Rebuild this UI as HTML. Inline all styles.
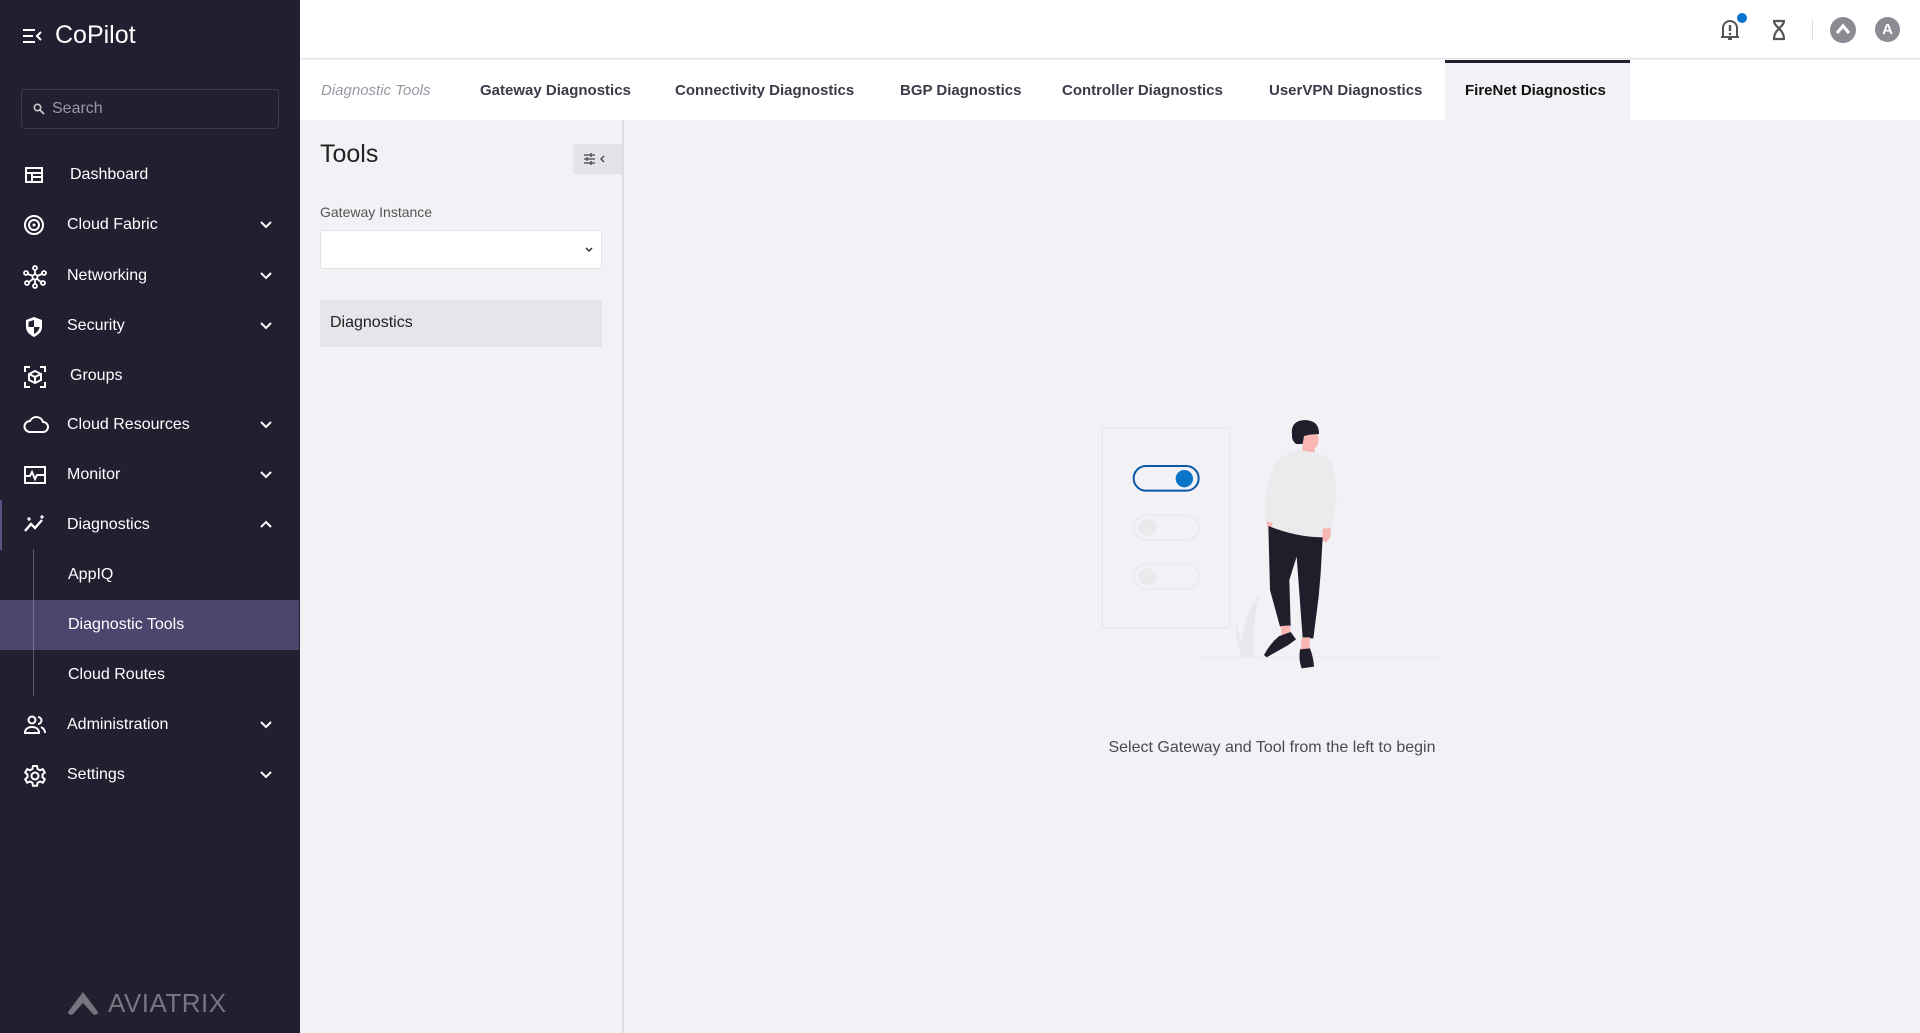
<!DOCTYPE html>
<html><head><meta charset="utf-8"><style>
*{box-sizing:border-box;margin:0;padding:0}
body{width:1920px;height:1033px;overflow:hidden;font-family:"Liberation Sans",sans-serif;background:#f2f2f6;position:relative}
.sb{position:absolute;left:0;top:0;width:300px;height:1033px;background:#211f30;color:#fff}
.logo{position:absolute;left:55px;top:21px;font-size:25px}
.ham{position:absolute;left:22px;top:28px}
.search{position:absolute;left:21px;top:89px;width:258px;height:40px;border:1px solid #3a3750;border-radius:4px;color:#9a98a8;font-size:16px;padding:10px 0 0 30px}
.search svg{position:absolute;left:11px;top:13px}
.it{position:absolute;left:0;width:300px;height:50px;font-size:16px;line-height:50px}
.it .t{position:absolute;left:67px}
.it .ic{position:absolute;left:23px;top:14px}
.it .ch{position:absolute;left:259px;top:19px}
.sub .t{left:68px}
.act{background:#4e456e}
.hdr{position:absolute;left:300px;top:0;width:1620px;height:59px;background:#fff;border-bottom:1px solid #e3e3e8}
.tabs{position:absolute;left:300px;top:60px;width:1620px;height:60px;background:#fff;font-size:15px;font-weight:bold;color:#3b3a48}
.tabs span{position:absolute;top:22px}
.panel{position:absolute;left:300px;top:120px;width:324px;height:913px;border-right:2px solid #dcdce2;background:#f2f2f6}
</style></head><body>
<div class="sb">
 <svg class="ham" width="20" height="16" viewBox="0 0 20 16"><path d="M1 2h12M1 8h10M1 14h12M19 4l-4 4 4 4" stroke="#fff" stroke-width="2" fill="none"/></svg>
 <div class="logo">CoPilot</div>
 <div class="search"><svg width="12" height="12" viewBox="0 0 12 12"><circle cx="4.5" cy="4.5" r="3.2" stroke="#ccc" stroke-width="1.6" fill="none"/><path d="M7 7l4 4" stroke="#ccc" stroke-width="1.8"/></svg>Search</div>

 <div class="it" style="top:150px"><svg class="ic" width="22" height="22" viewBox="0 0 22 22"><rect x="3" y="4" width="16" height="14" stroke="#fff" stroke-width="2" fill="none"/><path d="M3 9h16M9 9v9M9 13h10" stroke="#fff" stroke-width="2"/></svg><span class="t" style="left:70px">Dashboard</span></div>
 <div class="it" style="top:200px"><svg class="ic" width="22" height="22" viewBox="0 0 22 22"><circle cx="11" cy="11" r="9" stroke="#fff" stroke-width="2" fill="none"/><circle cx="11" cy="11" r="5" stroke="#fff" stroke-width="2" fill="none"/><circle cx="11" cy="11" r="1.5" fill="#fff"/></svg><span class="t">Cloud Fabric</span><svg class="ch" width="14" height="12" viewBox="0 0 14 12"><path d="M2 3l5 5 5-5" stroke="#fff" stroke-width="2" fill="none"/></svg></div>
 <div class="it" style="top:251px"><svg class="ic" width="24" height="24" viewBox="0 0 24 24"><g stroke="#fff" stroke-width="1.8" fill="none"><circle cx="12" cy="12" r="2.5"/><circle cx="12" cy="3" r="2"/><circle cx="12" cy="21" r="2"/><circle cx="3" cy="8" r="2"/><circle cx="21" cy="8" r="2"/><circle cx="4" cy="18" r="2"/><circle cx="20" cy="18" r="2"/><path d="M12 5v5M12 14v5M5 9l5 2M19 9l-5 2M6 17l4-3M18 17l-4-3"/></g></svg><span class="t">Networking</span><svg class="ch" width="14" height="12" viewBox="0 0 14 12"><path d="M2 3l5 5 5-5" stroke="#fff" stroke-width="2" fill="none"/></svg></div>
 <div class="it" style="top:301px"><svg class="ic" width="22" height="24" viewBox="0 0 22 24"><path d="M11 2l8 3v7c0 5-4 8-8 10-4-2-8-5-8-10V5z" fill="#fff"/><path d="M11 5v7H5.5V6.8z M11 12h5.6c-.6 3.5-3 5.6-5.6 7z" fill="#211f30"/></svg><span class="t">Security</span><svg class="ch" width="14" height="12" viewBox="0 0 14 12"><path d="M2 3l5 5 5-5" stroke="#fff" stroke-width="2" fill="none"/></svg></div>
 <div class="it" style="top:351px"><svg class="ic" width="24" height="24" viewBox="0 0 24 24"><g stroke="#fff" stroke-width="2" fill="none"><path d="M2 7V2h5M17 2h5v5M22 17v5h-5M7 22H2v-5"/><path d="M12 6l6 3v6l-6 3-6-3V9z"/><path d="M6 9l6 3 6-3M12 12v6"/></g></svg><span class="t" style="left:70px">Groups</span></div>
 <div class="it" style="top:400px"><svg class="ic" width="26" height="22" viewBox="0 0 26 22"><path d="M7 18h13a5 5 0 0 0 0-10 7 7 0 0 0-13-1 5.5 5.5 0 0 0 0 11z" stroke="#fff" stroke-width="2" fill="none"/></svg><span class="t">Cloud Resources</span><svg class="ch" width="14" height="12" viewBox="0 0 14 12"><path d="M2 3l5 5 5-5" stroke="#fff" stroke-width="2" fill="none"/></svg></div>
 <div class="it" style="top:450px"><svg class="ic" width="24" height="22" viewBox="0 0 24 22"><g stroke="#fff" stroke-width="2" fill="none"><rect x="2" y="3" width="20" height="16"/><path d="M2 12h5l2-4 3 7 2-4h8"/></g></svg><span class="t">Monitor</span><svg class="ch" width="14" height="12" viewBox="0 0 14 12"><path d="M2 3l5 5 5-5" stroke="#fff" stroke-width="2" fill="none"/></svg></div>
 <div style="position:absolute;left:0;top:500px;width:2px;height:50px;background:#5a5280"></div>
 <div class="it" style="top:500px"><svg class="ic" width="24" height="22" viewBox="0 0 24 22"><path d="M2 17l6-7 4 4 7-8" stroke="#fff" stroke-width="2.4" fill="none"/><path d="M4 5h4M6 3v4M19 1v4M17 3h4" stroke="#fff" stroke-width="1.3"/></svg><span class="t">Diagnostics</span><svg class="ch" width="14" height="12" viewBox="0 0 14 12"><path d="M2 8l5-5 5 5" stroke="#fff" stroke-width="2" fill="none"/></svg></div>
 <div style="position:absolute;left:33px;top:549px;width:1px;height:147px;background:#5a5870"></div>
 <div class="it sub" style="top:550px"><span class="t">AppIQ</span></div>
 <div class="it sub act" style="top:600px;width:299px"><span class="t">Diagnostic Tools</span></div>
 <div style="position:absolute;left:33px;top:600px;width:1px;height:50px;background:#7a7294"></div>
 <div class="it sub" style="top:650px"><span class="t">Cloud Routes</span></div>
 <div class="it" style="top:700px"><svg class="ic" width="24" height="22" viewBox="0 0 24 22"><g stroke="#fff" stroke-width="2" fill="none"><circle cx="9" cy="6" r="3.5"/><path d="M2 19c0-4 3-6 7-6s7 2 7 6z"/><path d="M15 3a3.5 3.5 0 0 1 0 7M18 13c2 1 4 3 4 6"/></g></svg><span class="t">Administration</span><svg class="ch" width="14" height="12" viewBox="0 0 14 12"><path d="M2 3l5 5 5-5" stroke="#fff" stroke-width="2" fill="none"/></svg></div>
 <div class="it" style="top:750px"><svg class="ic" width="24" height="24" viewBox="0 0 24 24"><g stroke="#fff" stroke-width="2" fill="none"><circle cx="12" cy="12" r="3.5"/><path d="M10 2h4l.6 3 2.4 1.3 2.8-1.2 2 3.4-2.3 2v2.8l2.3 2-2 3.4-2.8-1.2-2.4 1.3-.6 3h-4l-.6-3-2.4-1.3-2.8 1.2-2-3.4 2.3-2v-2.8l-2.3-2 2-3.4 2.8 1.2L9.4 5z"/></g></svg><span class="t">Settings</span><svg class="ch" width="14" height="12" viewBox="0 0 14 12"><path d="M2 3l5 5 5-5" stroke="#fff" stroke-width="2" fill="none"/></svg></div>
 <svg style="position:absolute;left:65px;top:990px" width="36" height="26" viewBox="0 0 36 26"><path d="M18 2L3 22a3 3 0 0 0 5 2l10-11 10 11a3 3 0 0 0 5-2z" fill="#77757f"/></svg>
 <div style="position:absolute;left:108px;top:988px;font-size:26px;color:#77757f;letter-spacing:0.5px">AVIATRIX</div>
</div>

<div class="hdr">
 <svg style="position:absolute;left:1419px;top:17px" width="22" height="26" viewBox="0 0 22 26"><path d="M4 20V11a7 7 0 0 1 14 0v9h2H2z" stroke="#555" stroke-width="2" fill="none"/><path d="M11 8v6" stroke="#555" stroke-width="2.4"/><circle cx="11" cy="17" r="1.3" fill="#555"/><path d="M9 22h4" stroke="#555" stroke-width="2"/></svg>
 <div style="position:absolute;left:1437px;top:13px;width:10px;height:10px;border-radius:50%;background:#0a72cc"></div>
 <svg style="position:absolute;left:1471px;top:19px" width="16" height="22" viewBox="0 0 16 22"><path d="M2 2h12M2 20h12M3 2c0 6 10 8 10 18M13 2c0 6-10 8-10 18" stroke="#555" stroke-width="2.2" fill="none"/></svg>
 <div style="position:absolute;left:1512px;top:20px;width:1px;height:20px;background:#ddd"></div>
 <div style="position:absolute;left:1530px;top:17px;width:26px;height:26px;border-radius:50%;background:#8c8a92"></div>
 <svg style="position:absolute;left:1535px;top:23px" width="16" height="12" viewBox="0 0 16 12"><path d="M2 10l6-7 6 7" stroke="#fff" stroke-width="3.2" fill="none"/></svg>
 <div style="position:absolute;left:1575px;top:17px;width:25px;height:25px;border-radius:50%;background:#8c8a92;color:#fff;font-weight:bold;font-size:15px;text-align:center;line-height:25px">A</div>
</div>

<div class="tabs">
 <span style="left:21px;font-style:italic;font-weight:normal;color:#9a99a4">Diagnostic Tools</span>
 <span style="left:180px">Gateway Diagnostics</span>
 <span style="left:375px">Connectivity Diagnostics</span>
 <span style="left:600px">BGP Diagnostics</span>
 <span style="left:762px">Controller Diagnostics</span>
 <span style="left:969px">UserVPN Diagnostics</span>
 <div style="position:absolute;left:1145px;top:0;width:185px;height:60px;background:#f2f2f6;border-top:3px solid #211f30"></div>
 <span style="left:1165px;color:#111">FireNet Diagnostics</span>
</div>

<div class="panel">
 <div style="position:absolute;left:20px;top:20px;font-size:25px;color:#222">Tools</div>
 <div style="position:absolute;left:273px;top:24px;width:49px;height:30px;background:#e4e3e9;border-radius:3px 0 0 3px"></div>
 <svg style="position:absolute;left:283px;top:32px" width="28" height="14" viewBox="0 0 28 14"><path d="M1 3h11M1 7h11M1 11h11M8 1v4M4 5v4M8 9v4M21 4l-3 3 3 3" stroke="#444" stroke-width="1.3" fill="none"/></svg>
 <div style="position:absolute;left:20px;top:84px;font-size:14px;color:#555">Gateway Instance</div>
 <div style="position:absolute;left:20px;top:110px;width:282px;height:39px;background:#fff;border:1px solid #e2e2e8;border-radius:3px"></div>
 <svg style="position:absolute;left:284px;top:126px" width="10" height="8" viewBox="0 0 10 8"><path d="M2 2l3 3 3-3" stroke="#333" stroke-width="1.5" fill="none"/></svg>
 <div style="position:absolute;left:20px;top:180px;width:282px;height:47px;background:#e6e5ea;font-size:16px;color:#222;padding:14px 0 0 10px">Diagnostics</div>
</div>

<svg style="position:absolute;left:1080px;top:400px" width="400" height="300" viewBox="0 0 1200 900">
 <line x1="365" y1="772" x2="1085" y2="772" stroke="#e6e6eb" stroke-width="3"/>
 <rect x="67" y="83" width="383" height="600" rx="6" fill="none" stroke="#e6e6ec" stroke-width="4"/>
 <rect x="161" y="198" width="195" height="74" rx="37" fill="none" stroke="#0a58a6" stroke-width="6"/>
 <circle cx="313" cy="236" r="26" fill="#0a74c9"/>
 <rect x="161" y="346" width="195" height="74" rx="37" fill="none" stroke="#eaeaee" stroke-width="5"/>
 <circle cx="203" cy="383" r="26" fill="#eaeaed"/>
 <rect x="161" y="493" width="195" height="74" rx="37" fill="none" stroke="#eaeaee" stroke-width="5"/>
 <circle cx="203" cy="530" r="26" fill="#eaeaed"/>
 <path d="M540 585 Q480 650 485 770 L520 770 Q515 660 540 585z" fill="#e8e8ec"/>
 <path d="M468 670 Q470 730 485 770 L495 770z" fill="#e8e8ec"/>
 <path d="M670 120 L700 120 L705 160 L665 160z" fill="#f9b3ae"/>
 <ellipse cx="692" cy="118" rx="24" ry="32" fill="#f9b6b2"/>
 <path d="M636 105 Q630 62 675 60 Q718 62 717 102 L690 104 L672 108 L668 132 L648 132 Q634 120 636 105z" fill="#201e2b"/>
 <path d="M585 185 Q640 150 660 150 L720 160 L745 175 Q768 200 770 300 L755 385 L732 385 L728 410 Q650 420 580 385 L556 370 L555 290z" fill="#ebebee"/>
 <path d="M728 385 L752 385 L752 410 L738 428 L727 420z" fill="#f9b6b2"/>
 <path d="M560 365 L578 368 L575 385 L562 380z" fill="#f9b6b2"/>
 <path d="M565 378 Q650 412 728 412 L722 520 L716 590 L700 715 L668 715 L650 470 L628 540 L632 678 L600 680 L570 570z" fill="#201e2b"/>
 <path d="M602 678 L630 676 L632 700 L606 712z" fill="#f9b6b2"/>
 <path d="M665 712 L690 712 L688 748 L662 748z" fill="#f9b6b2"/>
 <path d="M598 708 L632 696 L648 718 L625 735 L560 772 L552 765 Q570 730 598 708z" fill="#201e2b"/>
 <path d="M660 748 L690 745 Q700 770 702 800 L665 805 Q655 780 660 748z" fill="#201e2b"/>
</svg>
<div style="position:absolute;left:1072px;top:739px;width:400px;text-align:center;font-size:16px;color:#4a4a55">Select Gateway and Tool from the left to begin</div>
</body></html>
